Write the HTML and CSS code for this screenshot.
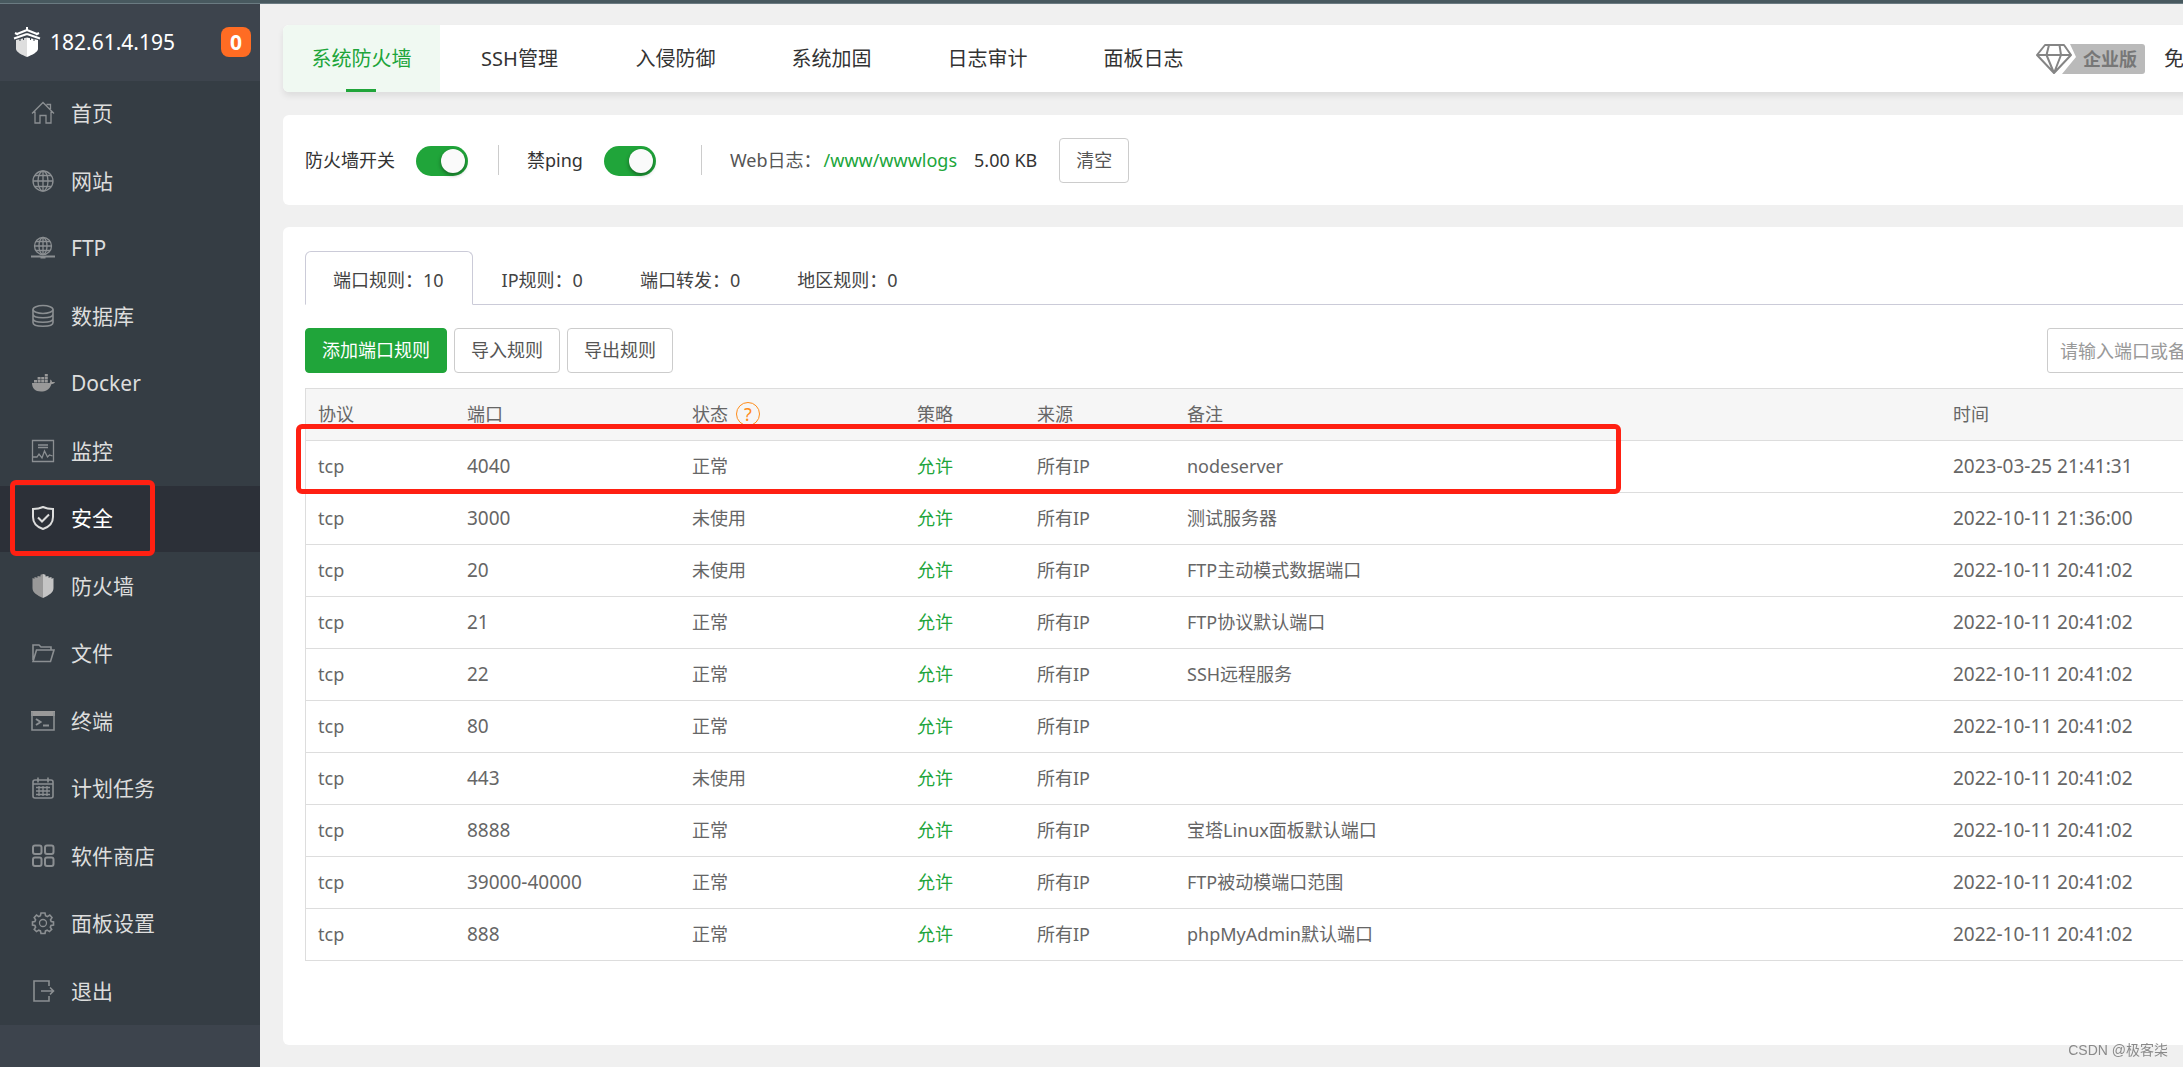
FILE: index.html
```html
<!DOCTYPE html>
<html lang="zh-CN">
<head>
<meta charset="utf-8">
<title>安全</title>
<link rel="stylesheet" href="styles.css">
</head>
<body>
<div class="topbar"></div>
<div class="app">
  <aside class="sidebar">
    <div class="brand">
      <svg class="brand-logo" viewBox="0 0 28 30" aria-hidden="true">
        <path d="M14 0v4M14 3L4 7M14 3l10 4" stroke="#fff" stroke-width="2" fill="none"/>
        <path d="M14 7L1 11.500M14 7l13 4.500M5 7.500L2 6M23 7.500L26 6" stroke="#fff" stroke-width="2" fill="none"/>
        <path d="M14 10.500L3 13v9c0 3 6 6 11 8z" fill="#dedede"/>
        <path d="M14 10.500l11 2.500v9c0 3-6 6-11 8z" fill="#fff"/>
        <path d="M7 11v3M10.500 10v3M17.500 10v3M21 11v3" stroke="#3d444d" stroke-width="1"/>
      </svg>
      <span class="brand-ip">182.61.4.195</span>
      <span class="brand-count">0</span>
    </div>
    <nav>
      <ul class="menu">
        <li><a href="#"><svg viewBox="0 0 24 24"><path d="M1 12.500L12 1.500l11 11M4 10.500V22h5v-7.500h6V22h5V10.500M15.500 3.500h4V8"/></svg>首页</a></li>
        <li><a href="#"><svg viewBox="0 0 24 24"><circle cx="12" cy="12" r="10"/><ellipse cx="12" cy="12" rx="5" ry="10"/><path d="M12 2v20M2 12h20M4 6.500h16M4 17.500h16"/></svg>网站</a></li>
        <li><a href="#"><svg viewBox="0 0 24 24"><circle cx="12" cy="10" r="8.500"/><ellipse cx="12" cy="10" rx="4" ry="8.500"/><path d="M12 1.500v17M3.500 10h17M5 5.500h14M5 14.500h14"/><path class="bold" d="M0 20.500h24M9.500 21.500h5"/></svg>FTP</a></li>
        <li><a href="#"><svg viewBox="0 0 24 24"><g class="mid"><ellipse cx="12" cy="5.500" rx="10" ry="4"/><path d="M2 5.500v13c0 5 20 5 20 0v-13M2 10c0 5 20 5 20 0M2 14.500c0 5 20 5 20 0"/></g></svg>数据库</a></li>
        <li><a href="#"><svg viewBox="0 0 24 24"><path class="fill" d="M1 12h17.500c1-1 .8-2.500.5-3.500 1.500.5 2 1.500 2 2.500h3c-.5 1.500-2 2-3.500 2-2 6-6 7.500-10.500 7.500C4 20.500 1 17 1 12zM3 9h3v2.500H3zM6.600 9h3v2.500h-3zM10.200 9h3v2.500h-3zM13.800 9h3v2.500h-3zM6.600 6h3v2.500h-3zM10.200 6h3v2.500h-3zM13.800 6h3v2.500h-3zM13.800 3h3v2.500h-3z"/></svg>Docker</a></li>
        <li><a href="#"><svg viewBox="0 0 24 24"><path d="M1.500 1.500h21v21h-21zM7 6h10M7 8.500h10M2 18h4l2-3 3 4 2.500-7 3 6 2-2 3 1"/></svg>监控</a></li>
        <li class="active"><a href="#"><svg viewBox="0 0 24 24"><path class="bold" d="M12 1C9 2.500 5 3 2 3v8c0 6 4 10 10 12 6-2 10-6 10-12V3c-3 0-7-.5-10-2zM7 11.500l4 4 7-7"/></svg>安全</a><span class="mark mark-menu"></span></li>
        <li><a href="#"><svg viewBox="0 0 24 24"><path fill="#999" stroke="none" d="M12 0v24C6 21 1.500 19 1.500 14V4l2 .8V3l3 .8V2l3 .6V.8z"/><path fill="#c4c4c4" stroke="none" d="M12 0v24c6-3 10.500-5 10.500-10V4l-2 .8V3l-3 .8V2l-3 .6V.8z"/></svg>防火墙</a></li>
        <li><a href="#"><svg viewBox="0 0 24 24"><path class="mid" d="M2 19V4h6l2 2h10v3M2 20.500L5.500 9H23l-3.500 11.500z"/></svg>文件</a></li>
        <li><a href="#"><svg viewBox="0 0 24 24"><path class="fill" d="M0 2h24v5H0z"/><path class="mid" d="M1 3v18h22V3"/><path class="bold" d="M5 10l4.500 3L5 16M12 16.500h6"/></svg>终端</a></li>
        <li><a href="#"><svg viewBox="0 0 24 24"><path class="mid" d="M2 6c0-1 .5-2 2-2h16c1.500 0 2 1 2 2v14c0 1.500-.5 2-2 2H4c-1.500 0-2-.5-2-2zM7 1.500v5M17 1.500v5M2 8h20"/><path d="M5 11.500h14M5 15h14M5 18.500h14M8 10v10M12 10v10M16 10v10"/></svg>计划任务</a></li>
        <li><a href="#"><svg viewBox="0 0 24 24"><g class="bold"><rect x="2" y="1.500" width="8.500" height="8.500" rx="2"/><rect x="14" y="1.500" width="8.500" height="8.500" rx="2"/><rect x="2" y="13.500" width="8.500" height="8.500" rx="2"/><rect x="14" y="13.500" width="8.500" height="8.500" rx="2"/></g></svg>软件商店</a></li>
        <li><a href="#"><svg viewBox="0 0 24 24"><circle cx="12" cy="12" r="3.500"/><path class="mid" d="M10 2h4l.6 2.800 1.700.8L18.800 4 21 6.600l-1.500 2.200.7 1.700 2.300.5v3l-2.500.5-.7 1.700 1.400 2.200-2.300 2.200-2.200-1.400-1.700.7L14 22.500h-4l-.6-2.600-1.700-.7L5.500 20.600 3.200 18.400l1.400-2.200-.7-1.700L1.500 14v-3l2.400-.5.7-1.700L3.200 6.600 5.500 4l2.300 1.600 1.600-.8z"/></svg>面板设置</a></li>
        <li><a href="#"><svg viewBox="0 0 24 24"><path class="mid" d="M18 7V2H3v20h15v-5M10 12h12M19 8.500l3.500 3.500-3.500 3.500"/></svg>退出</a></li>
      </ul>
    </nav>
    <div class="sidebar-foot"></div>
  </aside>

  <main class="main">
    <header class="card header">
      <nav class="tabs">
        <a class="tab current" href="#">系统防火墙</a>
        <a class="tab" href="#">SSH管理</a>
        <a class="tab" href="#">入侵防御</a>
        <a class="tab" href="#">系统加固</a>
        <a class="tab" href="#">日志审计</a>
        <a class="tab" href="#">面板日志</a>
      </nav>
      <div class="edition">
        <span class="badge">
          <svg class="gem" viewBox="0 0 40 30" aria-hidden="true">
            <path d="M34 0h6v30H26L40 13z" fill="#bababa"/>
            <path d="M9 1h19l7 10-17 18L1 11zM1 11h34M13 1l-2.500 10L18 29l7-18L23.500 1" fill="none" stroke="#858585" stroke-width="2" stroke-linejoin="round"/>
          </svg><span class="badge-text">企业版</span>
        </span>
        <span>免费版</span>
      </div>
    </header>

    <section class="card switches">
      <label for="fw">防火墙开关</label>
      <input class="toggle" type="checkbox" id="fw" checked>
      <span class="divider"></span>
      <label for="ping">禁ping</label>
      <input class="toggle" type="checkbox" id="ping" checked>
      <span class="divider wide"></span>
      <span class="log-label">Web日志：</span><a class="log-path" href="#">/www/wwwlogs</a>
      <span class="log-size">5.00 KB</span>
      <button class="btn" type="button">清空</button>
    </section>

    <section class="card rules">
      <nav class="subtabs">
        <a class="subtab current" href="#">端口规则：10</a>
        <a class="subtab" href="#">IP规则：0</a>
        <a class="subtab" href="#">端口转发：0</a>
        <a class="subtab" href="#">地区规则：0</a>
      </nav>
      <div class="toolbar">
        <button class="btn primary" type="button">添加端口规则</button>
        <button class="btn" type="button">导入规则</button>
        <button class="btn" type="button">导出规则</button>
        <input class="search" type="text" placeholder="请输入端口或备注" aria-label="请输入端口或备注">
      </div>
      <table class="grid">
        <colgroup><col class="c-proto"><col class="c-port"><col class="c-state"><col class="c-policy"><col class="c-source"><col class="c-note"><col></colgroup>
        <thead>
          <tr><th>协议</th><th>端口</th><th><span class="state-head">状态<a class="help" href="#">?</a></span></th><th>策略</th><th>来源</th><th>备注</th><th>时间</th></tr>
        </thead>
        <tbody>
          <tr><td class="marked">tcp<span class="mark mark-row"></span></td><td class="num">4040</td><td>正常</td><td class="ok">允许</td><td>所有IP</td><td>nodeserver</td><td class="num">2023-03-25 21:41:31</td></tr>
          <tr><td>tcp</td><td class="num">3000</td><td>未使用</td><td class="ok">允许</td><td>所有IP</td><td>测试服务器</td><td class="num">2022-10-11 21:36:00</td></tr>
          <tr><td>tcp</td><td class="num">20</td><td>未使用</td><td class="ok">允许</td><td>所有IP</td><td>FTP主动模式数据端口</td><td class="num">2022-10-11 20:41:02</td></tr>
          <tr><td>tcp</td><td class="num">21</td><td>正常</td><td class="ok">允许</td><td>所有IP</td><td>FTP协议默认端口</td><td class="num">2022-10-11 20:41:02</td></tr>
          <tr><td>tcp</td><td class="num">22</td><td>正常</td><td class="ok">允许</td><td>所有IP</td><td>SSH远程服务</td><td class="num">2022-10-11 20:41:02</td></tr>
          <tr><td>tcp</td><td class="num">80</td><td>正常</td><td class="ok">允许</td><td>所有IP</td><td></td><td class="num">2022-10-11 20:41:02</td></tr>
          <tr><td>tcp</td><td class="num">443</td><td>未使用</td><td class="ok">允许</td><td>所有IP</td><td></td><td class="num">2022-10-11 20:41:02</td></tr>
          <tr><td>tcp</td><td class="num">8888</td><td>正常</td><td class="ok">允许</td><td>所有IP</td><td>宝塔Linux面板默认端口</td><td class="num">2022-10-11 20:41:02</td></tr>
          <tr><td>tcp</td><td class="num">39000-40000</td><td>正常</td><td class="ok">允许</td><td>所有IP</td><td>FTP被动模端口范围</td><td class="num">2022-10-11 20:41:02</td></tr>
          <tr><td>tcp</td><td class="num">888</td><td>正常</td><td class="ok">允许</td><td>所有IP</td><td>phpMyAdmin默认端口</td><td class="num">2022-10-11 20:41:02</td></tr>
        </tbody>
      </table>
    </section>
  </main>
</div>
<div class="watermark">CSDN @极客柒</div>
</body>
</html>
```
FILE: styles.css
```css
* { box-sizing: border-box; }

body {
  margin: 0;
  min-height: 100vh;
  display: flex;
  flex-direction: column;
  overflow-x: hidden;
  background: #f0f0f0;
  color: #333;
  font: 18px/26px "Noto Sans", "Noto Sans CJK SC", sans-serif;
}

a { color: inherit; text-decoration: none; }

.topbar {
  height: 4px;
  background: #48595f;
  border-bottom: 1px solid #6b7b82;
}

.app { flex: 1; display: flex; overflow: hidden; }

/* Sidebar */
.sidebar {
  flex: none;
  width: 260px;
  display: flex;
  flex-direction: column;
  background: #353d44;
}

.brand {
  height: 77px;
  padding: 0 9px 2px 13px;
  display: flex;
  align-items: center;
  background: #3d444d;
  color: #fff;
  font-size: 21px;
}

.brand-logo { width: 28px; height: 30px; margin-right: 9px; }

.brand-count {
  width: 30px;
  margin-left: auto;
  border-radius: 8px;
  background: #ff6c23;
  font-weight: bold;
  line-height: 30px;
  text-align: center;
}

.sidebar nav { flex: 1; display: flex; }

.menu {
  flex: 1;
  margin: 0;
  padding: 0;
  display: flex;
  flex-direction: column;
  justify-content: space-between;
  list-style: none;
}

.menu li { position: relative; }

.menu a {
  height: 66px;
  padding: 0 0 2px 31px;
  display: flex;
  align-items: center;
  gap: 16px;
  color: #ddd;
  font-size: 21px;
}

.menu svg { width: 24px; height: 24px; fill: none; stroke: #8b8f92; stroke-width: 1.3; }
.menu .mid { stroke-width: 1.6; }
.menu .bold { stroke-width: 2; }
.menu .fill { fill: #999; stroke: none; }
.menu .active { background: #2c3038; }
.menu .active a { color: #fff; }
.menu .active svg { stroke: #ddd; }

.sidebar-foot { height: 43px; background: #3d444d; }

/* Red annotation frames */
.mark {
  position: absolute;
  border: 5px solid #ff2012;
  border-radius: 6px;
  pointer-events: none;
}

.mark-menu { left: 10px; top: -6px; width: 145px; height: 76px; }
.mark-row { left: -10px; top: -17px; width: 1325px; height: 70px; }

/* Content: runs past the right edge of the window */
.main {
  flex: 1;
  margin-right: -179px;
  padding: 21px 0 23px 23px;
  display: flex;
  flex-direction: column;
}

.card { background: #fff; border-radius: 6px; }

.header {
  height: 67px;
  margin-bottom: 23px;
  padding-right: 138px;
  display: flex;
  justify-content: space-between;
  box-shadow: 0 4px 6px rgba(0, 0, 0, .08);
  font-size: 20px;
}

.tabs { display: flex; gap: 3px; }

.tab { width: 153px; line-height: 68px; text-align: center; }

.tab.current {
  position: relative;
  width: 157px;
  border-radius: 6px 0 0 6px;
  background: #f0f9f2;
  color: #20a53a;
}

.tab.current::after {
  content: "";
  position: absolute;
  left: 63px;
  bottom: 0;
  width: 30px;
  height: 3px;
  background: #20a53a;
}

.edition { display: flex; align-items: center; gap: 19px; }
.badge { display: flex; }
.gem { width: 40px; height: 30px; }

.badge-text {
  padding: 0 8px 0 7px;
  border-radius: 0 3px 3px 0;
  background: #bababa;
  color: #777;
  font-size: 18px;
  font-weight: bold;
  line-height: 30px;
}

.switches {
  height: 90px;
  margin-bottom: 22px;
  padding: 0 22px;
  display: flex;
  align-items: center;
}

.toggle {
  appearance: none;
  width: 52px;
  height: 30px;
  margin: 1px 0 0 21px;
  padding: 3px;
  display: flex;
  justify-content: flex-end;
  border-radius: 15px;
  background: #20a53a;
}

.toggle::before {
  content: "";
  width: 24px;
  height: 24px;
  border-radius: 50%;
  background: #fafafa;
  box-shadow: 0 2px 4px rgba(0, 0, 0, .4);
}

.divider { width: 1px; height: 30px; margin: 0 28px 0 30px; background: #ccc; }
.divider.wide { margin-left: 45px; }
.log-label { color: #555; }
.log-path { padding-left: 2px; color: #20a53a; }
.log-size { margin: 0 22px 0 17px; }

.btn {
  height: 45px;
  padding: 0 16px 1px;
  border: 1px solid #ccc;
  border-radius: 4px;
  background: #fff;
  color: #555;
  font: inherit;
}

.btn.primary { border-color: #20a53a; background: #20a53a; color: #fff; }

.rules { flex: 1; padding: 24px 22px 84px; }

.subtabs { display: flex; gap: 1px; border-bottom: 1px solid #cbcbd8; }

.subtab {
  height: 53px;
  padding: 0 28px;
  color: #444;
  line-height: 58px;
}

.subtab.current {
  height: 54px;
  margin-bottom: -1px;
  padding: 0 28px 0 27px;
  border: 1px solid #cbcbd8;
  border-bottom-color: #fff;
  border-radius: 6px 6px 0 0;
  background: #fff;
  line-height: 56px;
}

.toolbar { margin: 23px 0 15px; display: flex; gap: 7px; }

.search {
  width: 293px;
  height: 45px;
  margin-left: auto;
  padding: 0 12px;
  border: 1px solid #ccc;
  border-radius: 3px;
  font: inherit;
}

.search::placeholder { color: #999; }

.grid {
  width: 100%;
  table-layout: fixed;
  border-collapse: separate;
  border-spacing: 0;
  border: 1px solid #ddd;
  border-bottom: 0;
  color: #666;
}

.c-proto { width: 149px; }
.c-port, .c-state { width: 225px; }
.c-policy { width: 120px; }
.c-source { width: 150px; }
.c-note { width: 766px; }

.grid th, .grid td {
  height: 52px;
  padding: 0 12px 2px;
  border-bottom: 1px solid #ddd;
  text-align: left;
  font-weight: normal;
}

.grid th { background: #f6f6f6; }
.grid .marked { position: relative; }
.grid .num { font-size: 19px; }
.grid .ok { color: #20a53a; }

.state-head { display: flex; align-items: center; gap: 8px; }

.help {
  width: 24px;
  height: 24px;
  border: 1px solid #ff8c1a;
  border-radius: 50%;
  color: #ff8c1a;
  line-height: 22px;
  text-align: center;
}

.watermark {
  position: fixed;
  right: 15px;
  bottom: 7px;
  color: #8a8a8a;
  font: 14px/20px "Liberation Sans", "Noto Sans CJK SC", sans-serif;
}
```
